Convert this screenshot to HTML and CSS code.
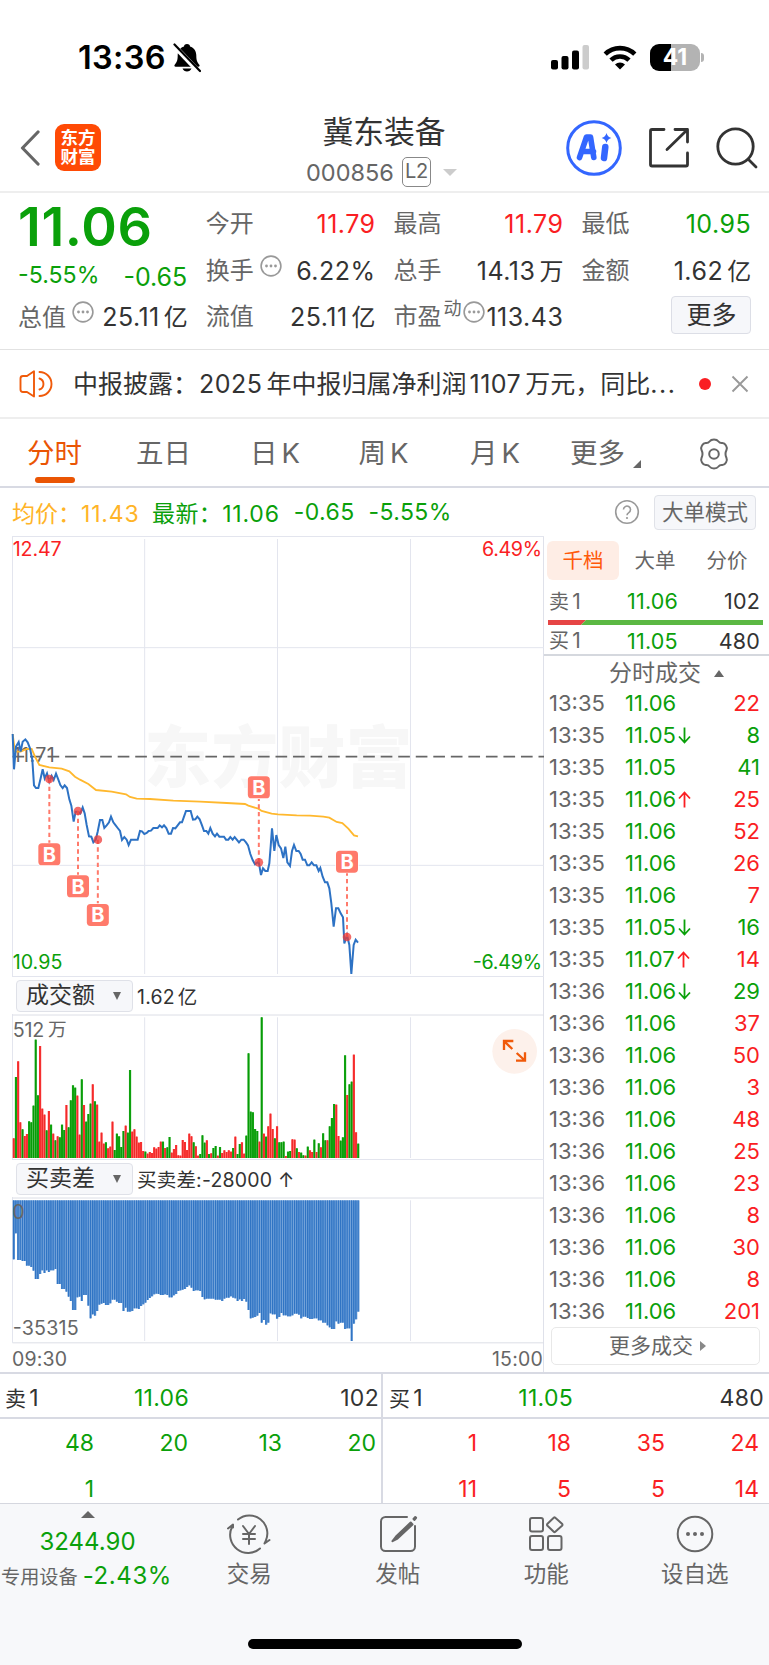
FILE: index.html
```html
<!DOCTYPE html>
<html lang="zh-CN">
<head>
<meta charset="utf-8">
<title>冀东装备 000856</title>
<link rel="stylesheet" href="styles.css">
</head>
<body>
<div class="status">
  <span class="clock">13:36</span>
  <svg class="bell" width="28" height="30" viewBox="0 0 28 30"><path d="M14 1c2 0 3 1 3 2.6 4 1.400 6.300 4.500 6.300 9 0 5.400 1.200 7 3 9.200 .7.900.3 2-1 2H2.700c-1.300 0-1.700-1.100-1-2 1.800-2.200 3-3.800 3-9.200 0-4.500 2.300-7.600 6.300-9C11 2 12 1 14 1zM9.500 25.500h9c-.8 2-2.500 3-4.500 3s-3.700-1-4.500-3z"/><path d="M0 1.500L26 29" stroke="#fff" stroke-width="5"/><path d="M1.500 1.500L27 28" stroke="#000" stroke-width="2.200" stroke-linecap="round"/></svg>
  <svg class="signal" width="38" height="25" viewBox="0 0 38 25"><rect y="15" width="7" height="9.500" rx="2"/><rect x="10.500" y="11" width="7" height="13.500" rx="2"/><rect x="21" y="5.500" width="7" height="19" rx="2"/><rect x="31.500" y="0" width="6.500" height="24.500" rx="2" fill="#ccc"/></svg>
  <svg class="wifi" width="34" height="25" viewBox="0 0 34 25" fill="none" stroke="#000" stroke-width="4.600"><path d="M2.200 9.200a21 21 0 0 1 29.600 0"/><path d="M8 15.200a12.800 12.800 0 0 1 18 0"/><path d="M17 24.500l-5-5.100a7.200 7.200 0 0 1 10 0z" fill="#000" stroke="none"/></svg>
  <span class="battery">41</span><i class="nub"></i>
</div>

<header class="head">
  <svg class="back" width="20" height="36" viewBox="0 0 20 36" fill="none" stroke="#666" stroke-width="3.200" stroke-linecap="round" stroke-linejoin="round"><path d="M18 2L2.500 18 18 34"/></svg>
  <div class="logo">东方<br>财富</div>
  <div class="title">
    <h1>冀东装备</h1>
    <div class="code">000856<span class="l2">L2</span><i class="caret"></i></div>
  </div>
  <svg class="ai" width="56" height="56" viewBox="0 0 56 56"><circle cx="28" cy="28" r="26.300" fill="none" stroke="#3366ff" stroke-width="3"/><path d="M13.500 37.500L20.500 17h4l3.300 20.500M16.500 31.500h11" fill="none" stroke="#3366ff" stroke-width="5.600" stroke-linejoin="round" stroke-linecap="round"/><path d="M39.300 27l-1.300 11" stroke="#3366ff" stroke-width="6.500" stroke-linecap="round"/><path d="M40.500 13q1 4 4.800 5-3.800 1-4.800 5-1-4-4.800-5 3.800-1 4.800-5z" fill="#3366ff"/></svg>
  <svg class="share" width="42" height="42" viewBox="0 0 42 42" fill="none" stroke="#333" stroke-width="2.800" stroke-linejoin="round" stroke-linecap="round"><path d="M16 2.500H4a1.500 1.500 0 0 0-1.500 1.500v33.500A1.500 1.500 0 0 0 4 39h34a1.500 1.500 0 0 0 1.500-1.500V26M19 22.500L39 3M27 2.500h12.500V15"/></svg>
  <svg class="search" width="42" height="42" viewBox="0 0 42 42" fill="none" stroke="#333" stroke-width="2.800" stroke-linecap="round"><circle cx="19.500" cy="19.500" r="17.700"/><path d="M32.500 32.500l7.500 7.500"/></svg>
</header>

<section class="quote">
  <div class="col first">
    <div class="price">11.06</div>
    <div class="chg"><span>-5.55%</span><span class="b">-0.65</span></div>
    <div class="row cap"><label>总值</label><svg class="dots" viewBox="0 0 22 22"><use href="#dots"/></svg><span class="v">25.11<b>亿</b></span></div>
  </div>
  <div class="col">
    <div class="row"><label>今开</label><span class="v red">11.79</span></div>
    <div class="row"><label>换手</label><svg class="dots" viewBox="0 0 22 22"><use href="#dots"/></svg><span class="v">6.22%</span></div>
    <div class="row"><label>流值</label><span class="v">25.11<b>亿</b></span></div>
  </div>
  <div class="col">
    <div class="row"><label>最高</label><span class="v red">11.79</span></div>
    <div class="row"><label>总手</label><span class="v">14.13<b>万</b></span></div>
    <div class="row"><label>市盈</label><sup>动</sup><svg class="dots tight" viewBox="0 0 22 22"><g id="dots"><circle cx="11" cy="11" r="9.900" fill="none" stroke="#999" stroke-width="1.600"/><circle cx="6.500" cy="11" r="1.400" fill="#999"/><circle cx="11" cy="11" r="1.400" fill="#999"/><circle cx="15.500" cy="11" r="1.400" fill="#999"/></g></svg><span class="v">113.43</span></div>
  </div>
  <div class="col">
    <div class="row"><label>最低</label><span class="v green">10.95</span></div>
    <div class="row"><label>金额</label><span class="v">1.62<b>亿</b></span></div>
    <button class="more">更多</button>
  </div>
</section>

<section class="news">
  <svg width="34" height="28" viewBox="0 0 34 28" fill="none" stroke="#f05a0a" stroke-width="1.900" stroke-linejoin="round" stroke-linecap="round"><path d="M1.500 8.500Q1.500 6 4 6H8L15 1.200V26.500L8 22H4Q1.500 22 1.500 19.500ZM20.500 8.500a5.800 5.800 0 0 1 0 11M20.500 2a12 12 0 0 1 0 24"/></svg>
  <p>中报披露：<i>2025</i>年中报归属净利润<i>1107</i>万元，同比<span class="ell">...</span></p>
  <i class="dot"></i>
  <svg class="close" width="18" height="18" viewBox="0 0 18 18" stroke="#999" stroke-width="1.900"><path d="M1.500 1.500l15 15M16.500 1.500l-15 15"/></svg>
</section>

<nav class="tabs">
  <a class="on">分时</a><a>五日</a><a>日<i>K</i></a><a>周<i>K</i></a><a>月<i>K</i></a><a class="mr">更多<i class="tri"></i></a>
  <svg width="34" height="34" viewBox="0 0 34 34" fill="none" stroke="#666" stroke-width="2"><path d="M12.500 4.500Q14 2.500 17 2.500T21.500 4.500Q22.700 6.200 25 6 27.500 5.800 29 8.500 30.500 11 29.500 13 28.500 15 28.500 17T29.500 21Q30.500 23 29 25.500 27.500 28.200 25 28 22.700 27.800 21.500 29.500 20 31.500 17 31.500T12.500 29.500Q11.300 27.800 9 28 6.500 28.200 5 25.500 3.500 23 4.500 21 5.500 19 5.500 17T4.500 13Q3.500 11 5 8.500 6.500 5.800 9 6 11.300 6.200 12.500 4.500Z"/><circle cx="17" cy="17" r="4.800"/></svg>
</nav>

<div class="info">
  <span class="avg">均价：<i>11.43</i></span><span class="last">最新：<i>11.06</i></span><span class="last">-0.65</span><span class="last">-5.55%</span>
  <svg width="26" height="26" viewBox="0 0 26 26"><circle cx="13" cy="13" r="11.300" fill="none" stroke="#999" stroke-width="1.600"/><path d="M9.500 10.600a3.500 3.500 0 1 1 5.300 3c-1.300.8-1.800 1.300-1.800 2.700" fill="none" stroke="#999" stroke-width="1.600"/><circle cx="13" cy="19" r="1.100" fill="#999"/></svg>
  <button class="mode">大单模式</button>
</div>

<main class="body">
  <div class="charts">
    <svg class="c-price" width="544" height="441" viewBox="0 18 1632 1323">
      <text class="wm" x="433" y="757" textLength="804">东方财富</text>
      <g class="grid"><path d="M37.500 19.500H1632M37.500 18V1341M37.500 1339.500H1632M434 27V1332M832.500 27V1332M1231.500 27V1332M37.500 1006H1632"/><path d="M37.500 353H1632" stroke-width="5"/></g>
      <text class="lab" x="38" y="697" textLength="126">11.71</text>
      <path d="M37.500 680H1632" stroke="#666" stroke-width="5" stroke-dasharray="35 17.600" stroke-dashoffset="0"/>
      <polyline class="avgline" points="38,612 45,665 62,665 80,657 95,657 105,680 118,705 148,712 185,716 208,724 225,740 240,749 265,762 288,780 335,785 378,793 390,801 410,806 450,807 520,812 600,815 680,819 735,822 745,827 775,836 785,843 815,851 834,853 890,856 930,857 970,860 988,863 1010,876 1027,879 1045,896 1062,916 1074,919"/>
      <polyline class="priceline" points="38,612 42,718 48,650 56,636 62,665 68,635 76,628 83,637 90,655 97,690 102,766 108,774 115,774 122,745 128,718 134,745 141,730 148,755 155,738 161,750 168,731 175,749 181,765 188,774 194,766 201,774 208,808 214,827 221,875 227,845 234,845 241,850 248,832 254,850 260,885 267,919 274,920 280,937 287,929 293,905 300,870 307,870 313,894 320,886 327,877 333,860 340,877 347,886 353,894 360,903 366,930 373,921 380,929 386,945 393,929 413,929 420,903 426,904 433,912 440,909 446,903 453,902 460,894 473,894 479,886 486,892 492,886 499,894 506,911 513,911 519,894 526,895 533,886 540,877 546,877 552,860 558,843 572,843 579,869 586,868 592,860 599,868 606,886 612,903 619,903 625,911 631,894 638,911 645,919 651,911 658,920 672,920 678,929 685,929 691,921 698,929 704,921 717,937 724,929 731,929 738,937 744,946 751,972 758,990 765,1003 776,995 783,1035 789,1015 796,1023 803,1023 808,1000 812,950 816,895 823,963 829,915 836,945 843,955 850,984 856,950 862,997 870,1008 876,963 882,945 889,963 896,963 902,972 908,989 915,989 922,1006 928,1006 935,997 942,1006 949,1006 956,1023 961,1014 968,1040 975,1057 982,1057 988,1075 994,1120 1001,1190 1008,1135 1015,1135 1022,1150 1029,1162 1033,1240 1041,1215 1048,1245 1054,1332 1061,1245 1067,1229 1074,1238"/>
      <g id="marks"></g>
      <text class="lab red" x="38" y="78" textLength="147">12.47</text>
      <text class="lab red" x="1446" y="78" textLength="180">6.49%</text>
      <text class="lab green" x="38" y="1317" textLength="149">10.95</text>
      <text class="lab green" x="1418" y="1317" textLength="208">-6.49%</text>
    </svg>
    <div class="bar"><span class="sel">成交额<i></i></span><span class="val">1.62<b>亿</b></span></div>
    <svg class="c-vol" width="544" height="146" viewBox="0 132 1632 438">
      <g class="grid"><path d="M37.500 132V570M434 142V564M832.500 142V564M1231.500 142V564M37.500 568.500H1632"/><path d="M37.500 135H1632" stroke="#dcdee6" stroke-width="5"/></g>
      <g id="vol"></g>
      <text class="lab" x="38" y="200" textLength="95">512</text><text class="lab" x="144" y="198" style="font-size:56px">万</text>
      <circle cx="1544" cy="244" r="67" fill="#fdf1eb"/>
      <path d="M1512 240V213H1540M1514 215L1537 237M1548 272H1575V247M1573 270L1550 249" fill="none" stroke="#f05a0a" stroke-width="7"/>
    </svg>
    <div class="bar b2"><span class="sel">买卖差<i></i></span><span class="val">买卖差:-28000 ↑</span></div>
    <svg class="c-diff" width="544" height="147" viewBox="0 111 1632 441">
      <g class="grid"><path d="M37.500 111V548M434 121V543M832.500 121V543M1231.500 121V543"/><path d="M37.500 114H1632M37.500 548.500H1632" stroke="#dcdee6" stroke-width="5"/></g>
      <g id="diff"></g>
      <text class="lab" x="37" y="177">0</text>
      <text class="lab" x="38" y="524" textLength="198">-35315</text>
    </svg>
    <div class="axis"><span>09:30</span><span>15:00</span></div>
  </div>
  <aside class="side">
    <div class="stabs"><a class="on">千档</a><a>大单</a><a>分价</a></div>
    <div class="lv"><span>卖<i>1</i></span><span class="green">11.06</span><span>102</span></div>
    <svg class="ratio" width="215" height="5" viewBox="0 0 215 5"><path d="M0 0H38L33 5H0Z" fill="#e64545"/><path d="M38 0H215V5H33Z" fill="#5bb843"/></svg>
    <div class="lv l2r"><span>买<i>1</i></span><span class="green">11.05</span><span>480</span></div>
    <div class="deal">分时成交<i></i></div>
    <div id="ticks"></div>
    <button class="moredeal">更多成交<i></i></button>
  </aside>
</main>

<section class="queue">
  <div class="q">
    <div class="qh"><span>卖<i>1</i></span><span class="green">11.06</span><span>102</span></div>
    <div class="qr green"><span>48</span><span>20</span><span>13</span><span>20</span><span>1</span></div>
  </div>
  <div class="q">
    <div class="qh"><span>买<i>1</i></span><span class="green">11.05</span><span>480</span></div>
    <div class="qr red"><span>1</span><span>18</span><span>35</span><span>24</span><span>11</span><span>5</span><span>5</span><span>14</span></div>
  </div>
</section>

<footer class="foot">
  <div class="menu">
    <div class="idx"><i></i><strong>3244.90</strong><p><span>专用设备</span>-2.43%</p></div>
    <a><svg width="44" height="40" viewBox="0 0 44 40"><path d="M11 5.500A18 18 0 0 1 38.700 27M33 34.500A18 18 0 0 1 5 13M38.700 27l-1.200 2.500 5-3.500M1 14.500l5-4v3M16 12l6 8 6-8M22 20v10M16 20h12M16 25h12"/></svg>交易</a>
    <a><svg width="44" height="40" viewBox="0 0 44 40"><path d="M31 3H9.500A4.500 4.500 0 0 0 5 7.500v25A4.500 4.500 0 0 0 9.500 37h25a4.500 4.500 0 0 0 4.500-4.500V12"/><path d="M34.700 8.500L20 22.500l-3.500 4.700 5-2.700L36.500 10.500zM37.500 5l1.800-2 .8.800-1.600 2.200z" fill="#666"/></svg>发帖</a>
    <a><svg width="44" height="40" viewBox="0 0 44 40"><rect x="6" y="4" width="13" height="13.500" rx="2"/><path d="M31 3.500l7 6.200q1 1 0 2L31 18q-.5.400-1 0l-6.500-6.300q-1-1 0-2L30 3.500q.5-.4 1 0z"/><rect x="6" y="22" width="13" height="14" rx="2"/><rect x="24" y="22" width="13.500" height="14" rx="2"/></svg>功能</a>
    <a><svg width="44" height="40" viewBox="0 0 44 40"><circle cx="22" cy="20" r="17.300"/><g fill="#666" stroke="none"><circle cx="15" cy="20" r="2"/><circle cx="22" cy="20" r="2"/><circle cx="29" cy="20" r="2"/></g></svg>设自选</a>
  </div>
  <div class="home"></div>
</footer>
<script src="app.js"></script>
</body>
</html>
```

FILE: styles.css
```css
* { box-sizing: border-box; margin: 0; padding: 0; }
body { width: 769px; height: 1665px; background: #fff; color: #333; font-family: Inter, "Noto Sans CJK SC", sans-serif; overflow: hidden; }
i, b, em { font-style: normal; font-weight: inherit; }
button { font: inherit; color: #333; }
.red { color: #fa1e23; fill: #fa1e23; }
.green { color: #0aa00a; fill: #0aa00a; }

.status { height: 100px; display: flex; align-items: center; padding: 15px 0 0 78px; }
.clock { font-size: 32.500px; font-weight: 600; color: #000; width: 95px; letter-spacing: .3px; }
.signal { margin-left: 350px; }
.wifi { margin-left: 14px; }
.battery { margin-left: 13px; width: 50px; height: 27px; border-radius: 9px; background: linear-gradient(90deg, #000 42%, #b3b3b3 42%); color: #fff; font-size: 23px; font-weight: 700; line-height: 27px; text-align: center; }
.nub { width: 3px; height: 9px; margin-left: 1px; border-radius: 0 4px 4px 0; background: #b3b3b3; }

.head { height: 93px; display: flex; align-items: center; border-bottom: 2px solid #eee; padding: 4px 0 0 20px; }
.logo { width: 46px; height: 47px; margin-left: 15px; border-radius: 9px; background: #ff4a05; color: #fff; font-size: 17.500px; font-weight: 700; line-height: 19px; text-align: center; padding-top: 4px; }
.title { margin-left: 205px; width: 156px; padding-top: 6px; text-align: center; }
.title h1 { font-size: 30.800px; font-weight: 400; line-height: 40px; white-space: nowrap; }
.code { display: flex; align-items: center; height: 34px; margin-top: 3px; font-size: 23.500px; color: #666; }
.l2 { width: 29px; height: 30px; border: 1.500px solid #888; border-radius: 5px; font-size: 20px; line-height: 27px; letter-spacing: -.5px; margin-left: 8px; flex: none; }
.caret { border: 7px solid transparent; border-top-color: #ccc; border-bottom: 0; margin-left: 12px; }
.ai { margin-left: 104px; }
.share { margin-left: 26px; }
.search { margin-left: 26px; }

.quote { height: 157px; border-bottom: 1.500px solid #e2e2e2; padding: 7px 18px 0 18px; display: grid; grid-template-columns: repeat(4, 169.300px); column-gap: 18.500px; }
.price { height: 53px; line-height: 53px; font-size: 54px; font-weight: 600; letter-spacing: .6px; color: #0aa00a; }
.chg { height: 47px; line-height: 45px; display: flex; justify-content: space-between; font-size: 23.200px; color: #0aa00a; }
.chg .b { font-size: 25px; line-height: 49px; }
.row { height: 46.700px; line-height: 48.500px; display: flex; font-size: 25px; position: relative; white-space: nowrap; }
.row.cap { height: 33px; line-height: 35px; }
.row label { font-size: 24px; color: #666; }
.row .v { margin-left: auto; letter-spacing: .5px; margin-right: -.5px; }
.row b { margin-left: 4px; font-size: 24px; letter-spacing: 0; }
.dots { width: 22px; height: 22px; margin: 8px 0 0 6px; }
.cap .dots { margin-top: 1px; }
.dots.tight { margin-left: 1px; }
.row sup { font-size: 18px; line-height: 32px; color: #666; margin-left: 2px; }
.more { width: 80px; height: 38px; margin: 3px 0 0 90px; font-size: 25px; line-height: 34px; border: 1.500px solid #dcdee6; border-radius: 4px; background: #f6f7fa; }

.news { height: 69px; display: flex; align-items: center; padding-left: 19px; border-bottom: 2px solid #eee; }
.news p { width: 603px; margin-left: 20px; font-size: 25px; line-height: 40px; white-space: nowrap; }
.news p i { letter-spacing: .5px; margin: 0 4px 0 1px; }
.news p i + i { margin-left: 3px; }
.ell { letter-spacing: 1.500px; }
.dot { width: 12px; height: 12px; margin-left: 23px; border-radius: 50%; background: #fa1e23; }
.close { margin-left: 20px; }

.tabs { height: 69px; display: grid; grid-template-columns: 109px 114px 108.500px 111.500px 100px 154px 34px; border-bottom: 2px solid #d8dae3; font-size: 27.500px; color: #666; align-items: center; padding-left: 27px; }
.tabs a { position: relative; line-height: 69px; }
.tabs a i { margin-left: 4px; }
.tabs .on { color: #ea5504; }
.tabs .on::after { content: ""; position: absolute; left: 8px; bottom: 5px; width: 40px; height: 6px; border-radius: 3px; background: #ea5504; }
.tabs a .tri { display: inline-block; border: 4px solid #666; border-left-color: transparent; border-top-color: transparent; margin-left: 8px; vertical-align: -5px; }
.tabs svg { margin-left: -27px; }

.info { height: 48px; display: flex; align-items: center; padding: 0 13px 0 12px; font-size: 23px; white-space: nowrap; }
.info .avg { color: #ffb428; width: 140px; }
.info .last { color: #0aa00a; margin-right: 14px; letter-spacing: .4px; }
.info .avg i, .info .last i { letter-spacing: .8px; }
.info svg { margin-left: auto; }
.mode { width: 102px; height: 35px; margin-left: 14px; border: 1.500px solid #e0e2e8; border-radius: 4px; background: #f6f7fa; color: #666; font-size: 21.500px; line-height: 31px; white-space: nowrap; }

.body { display: flex; height: 836px; }
.charts { width: 544px; border-right: 1px solid #dfe1ea; }
.charts svg { display: block; }
.grid path { fill: none; stroke: #e3e5ee; stroke-width: 3; }
.grid path[stroke] { stroke: #dcdee6; }
.lab { font-size: 59px; fill: #666; }
.lab.red { fill: #fa1e23; }
.lab.green { fill: #0aa00a; }
.wm { font-size: 200px; font-weight: 900; fill: #f7f7f7; font-family: "Noto Sans CJK SC", sans-serif; }
.avgline { fill: none; stroke: #ffb82e; stroke-width: 5.500; }
.priceline { fill: none; stroke: #2d72c4; stroke-width: 6; }
.mk { font-size: 60px; font-weight: 700; fill: #fff; text-anchor: middle; }
.bar { height: 37px; display: flex; align-items: center; padding: 0 0 0 16px; }
.sel { width: 117px; height: 32px; border: 1.500px solid #dfe1e8; border-radius: 4px; background: #f6f7fa; font-size: 23px; line-height: 31px; padding-left: 9px; display: flex; align-items: center; }
.sel i { border: 4.500px solid transparent; border-top: 8px solid #666; border-bottom: 0; margin-left: 18px; }
.val { font-size: 19.500px; margin-left: 4px; letter-spacing: .2px; }
.val b { margin-left: 3px; }
.axis { height: 28px; display: flex; justify-content: space-between; line-height: 30px; font-size: 19.500px; letter-spacing: .2px; color: #666; padding-left: 12px; }

.side { width: 225px; padding-left: 4px; font-size: 22px; }
.stabs { display: flex; margin: 5px 0 0 -1px; }
.stabs a { width: 72px; height: 39px; line-height: 39px; text-align: center; font-size: 20.500px; color: #666; border-radius: 6px; }
.stabs .on { background: #feede5; color: #ff5a0a; }
.lv, .tick { display: grid; grid-template-columns: 76px 70px 65px; padding-left: 1px; color: #666; }
.lv { height: 40px; line-height: 43px; font-size: 21.500px; letter-spacing: .2px; }
.lv span:first-child { font-size: 20px; }
.lv i { font-size: 21px; margin-left: 3px; }
.lv span:nth-child(2) { padding-left: 2px; }
.lv span:last-child, .tick span:last-child { text-align: right; }
.lv span:last-child { color: #333; }
.lv.l2r { height: 29px; line-height: 32px; }
.ratio { display: block; }
.deal { height: 33px; margin-left: -4px; border-top: 2px solid #d5d8de; font-size: 23px; line-height: 34px; color: #666; padding-left: 65px; white-space: nowrap; }
.deal i { display: inline-block; border: 5.500px solid transparent; border-bottom: 7px solid #666; border-top: 0; margin-left: 13px; vertical-align: 4px; }
.tick { height: 32px; line-height: 32px; }
.tick svg { margin-left: 2px; vertical-align: -1px; }
.tick .red, .lv .red { color: #fa1e23; }
.moredeal { display: block; width: 209px; height: 38px; margin: 0 0 0 3px; border: 1.500px solid #e8e8e8; border-radius: 5px; background: #fff; color: #666; font-size: 21px; line-height: 34px; padding-left: 4px; }
.moredeal i { display: inline-block; border: 5px solid transparent; border-left: 6px solid #888; border-right: 0; margin-left: 7px; vertical-align: 2px; }

.queue { height: 132px; display: grid; grid-template-columns: 383px 386px; border-top: 2px solid #d8dae3; border-bottom: 1.500px solid #d5d7df; font-size: 23px; }
.q:first-child { border-right: 2px solid #d8dae3; }
.qh { height: 45px; line-height: 48px; border-bottom: 2px solid #d8dae3; display: grid; grid-template-columns: 94px 90px 1fr; padding: 0 2px 0 5px; letter-spacing: .3px; }
.q:last-child .qh { padding: 0 5px 0 6px; }
.qh span:first-child { font-size: 21px; }
.qh i { font-size: 23px; margin-left: 3px; }
.qh span + span { text-align: right; }
.qh span.green { margin-left: -6px; }
.qr { display: grid; grid-template-columns: repeat(4, 94px); grid-auto-rows: 46px; line-height: 46px; text-align: right; padding-top: 1px; height: 84px; }
.q:first-child .qr { margin-left: 0; }

.foot { height: 161px; background: #f7f8fa; }
.menu { display: grid; grid-template-columns: 175px repeat(4, 148.500px); height: 135px; }
.menu a { display: flex; flex-direction: column; align-items: center; padding-top: 10px; font-size: 22.500px; line-height: 40px; color: #666; }
.menu svg { fill: none; stroke: #666; stroke-width: 2; stroke-linejoin: round; stroke-linecap: round; flex: none; }
.idx { color: #0aa00a; text-align: center; padding-top: 7px; }
.idx i { display: block; width: 0; margin: 0 auto; border: 7px solid transparent; border-bottom-color: #666; border-top: 0; }
.idx strong { display: block; font-weight: 400; font-size: 24px; line-height: 34px; margin-top: 7px; }
.idx p { font-size: 24px; line-height: 34px; letter-spacing: .6px; white-space: nowrap; text-align: left; padding-left: 1px; }
.idx p span { font-size: 19.200px; letter-spacing: 0; color: #666; margin-right: 5px; }
.home { width: 274px; height: 10px; margin: 0 auto; border-radius: 5px; background: #000; }
```

FILE: app.js
```js
const NS = 'http://www.w3.org/2000/svg';
function add(parent, tag, attrs, text) {
  const e = document.createElementNS(NS, tag);
  for (const k in attrs) e.setAttribute(k, attrs[k]);
  if (text) e.textContent = text;
  parent.appendChild(e);
}

// Turnover per minute: top edge of the bar, then direction.
const vol = '505R 321G 274R 457R 478G 498R 492R 454G 457G 407G 209G 376G 228R 416R 434R 481G 423R 464G 491R 511G 499R 502G 464G 480G 405R 472G 391G 346G 353G 377R 494R 328G 405R 455G 432G 401G 343R 394G 404R 515R 488R 521R 517G 535R 530R 455R 540G 491G 499G 531G 483G 467R 488G 300G 485R 478R 500R 518R 516R 543R 545G 551R 546R 549R 532R 536R 531R 515R 515G 534R 532G 501G 548R 537R 525R 556R 557R 510R 516R 540R 491R 499R 517G 529R 557R 552G 496G 518G 511R 552G 550R 534G 528G 557R 531G 549R 541R 546R 541R 545R 534G 500R 552G 522G 517R 551R 497G 250G 425G 427G 477G 483G 515R 142G 491R 500G 469R 431R 477R 505G 469R 517G 517G 515G 558R 545G 543G 508R 509R 535G 546R 548G 556G 557R 530G 541R 546R 509G 546R 520G 532R 490G 511G 511R 469G 444G 402G 404R 498R 512G 502G 256G 375R 343G 335G 254R 487R 521G'.split(' ');
const step = 1040 / vol.length;
const vg = document.getElementById('vol');
vol.forEach((s, i) => {
  const y = parseInt(s, 10), red = s.endsWith('R');
  const x = 38 + i * step;
  add(vg, 'rect', { x: x, y: y, width: step, height: 564 - y, fill: red ? '#ff3b3b' : '#1cab1c' });
  add(vg, 'rect', { x: x + 1.5, y: y, width: step - 3, height: 564 - y, fill: red ? '#f02a2a' : '#079a07' });
});

// Buy/sell difference: [x, bottom edge], held until the next entry.
const diff = [38,298,45,220,51,300,60,303,78,317,88,321,94,332,99,362,105,357,112,352,118,342,124,331,131,339,137,331,144,336,151,331,158,327,165,335,171,372,178,376,184,387,197,395,204,410,210,423,217,450,224,412,231,410,237,423,244,400,250,405,257,437,264,475,270,463,277,467,284,453,290,434,297,431,304,429,310,435,324,430,330,419,343,425,350,429,363,453,370,443,376,455,390,453,397,445,410,447,417,438,423,433,430,428,437,420,443,414,450,409,457,403,463,401,470,402,477,405,490,403,497,405,503,412,517,406,523,402,530,393,537,391,543,389,550,387,557,381,563,376,570,383,576,393,583,391,596,393,603,411,610,418,617,416,643,419,664,423,670,416,677,413,687,409,697,413,703,415,710,423,716,418,723,423,730,417,736,425,742,450,749,475,756,473,763,471,770,467,776,459,782,488,789,480,795,494,802,488,807,460,816,463,828,476,834,471,840,459,846,466,859,469,872,466,878,461,892,464,899,475,906,470,917,474,928,477,940,475,952,481,965,488,976,496,986,502,992,507,1004,484,1010,491,1018,488,1031,507,1038,505,1051,543,1058,491,1064,478,1070,455];
const dg = document.getElementById('diff');
let k = 0;
for (let i = 0; i < vol.length; i++) {
  const x = 38 + i * step;
  while (k + 2 < diff.length && diff[k + 2] <= x + 1.5) k += 2;
  add(dg, 'rect', { x: x, y: 121, width: step + .4, height: diff[k + 1] - 121, fill: '#5790d2' });
  add(dg, 'rect', { x: x + 1.5, y: 121, width: 2.6, height: diff[k + 1] - 121, fill: '#2a70c2' });
}

// Order markers: x, point y, badge y.
const mg = document.getElementById('marks');
[[148, 747, 973], [234, 843, 1069], [293.5, 929, 1155], [776.5, 997, 772], [1041, 1221, 995]].forEach(([x, y, b]) => {
  add(mg, 'path', { d: `M${x} ${y}V${b}`, stroke: '#ff7a6b', 'stroke-width': 6, 'stroke-dasharray': '13 10' });
  add(mg, 'circle', { cx: x, cy: y, r: 13, fill: '#ee3b38', 'fill-opacity': .75 });
  add(mg, 'rect', { x: x - 35, y: b - 35, width: 70, height: 70, rx: 12, fill: '#fff' });
  add(mg, 'rect', { x: x - 33, y: b - 33, width: 66, height: 66, rx: 11, fill: '#ff7a6b' });
  add(mg, 'text', { x: x, y: b + 22, class: 'mk' }, 'B');
});

// Trades: time, price, tick direction, volume, side.
const arrow = {
  u: '<svg width="13" height="17" viewBox="0 0 13 17" fill="none" stroke="#fa1e23" stroke-width="1.8"><path d="M6.500 16.500V2M1 7.500L6.500 1.500 12 7.500"/></svg>',
  d: '<svg width="13" height="17" viewBox="0 0 13 17" fill="none" stroke="#0aa00a" stroke-width="1.8"><path d="M6.500 .5V15M1 9.500L6.500 15.500 12 9.500"/></svg>',
  '-': ''
};
document.getElementById('ticks').innerHTML =
  '35 06 - 22 r,35 05 d 8 g,35 05 - 41 g,35 06 u 25 r,35 06 - 52 r,35 06 - 26 r,35 06 - 7 r,35 05 d 16 g,35 07 u 14 r,36 06 d 29 g,36 06 - 37 r,36 06 - 50 r,36 06 - 3 r,36 06 - 48 r,36 06 - 25 r,36 06 - 23 r,36 06 - 8 r,36 06 - 30 r,36 06 - 8 r,36 06 - 201 r'
    .split(',').map(r => {
      const [t, p, a, v, c] = r.split(' ');
      return `<div class="tick"><span>13:${t}</span><span class="green">11.${p}${arrow[a]}</span><span class="${c === 'r' ? 'red' : 'green'}">${v}</span></div>`;
    }).join('');
```
